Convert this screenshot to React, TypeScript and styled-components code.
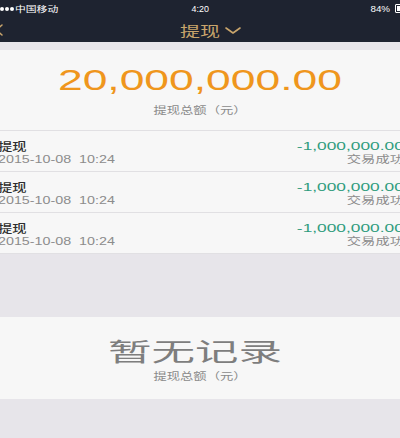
import React from "react";
import styled, { createGlobalStyle } from "styled-components";

const CJK = `"Noto Sans CJK SC", "Liberation Sans", sans-serif`;
const LATIN = `"Liberation Sans", "Noto Sans CJK SC", sans-serif`;

const GOLD = "#c9a56c";
const BAR = "#1e2330";

const Global = createGlobalStyle`
  html, body {
    margin: 0;
    padding: 0;
    background: #e7e5ea;
    overflow: hidden;
  }
  body {
    width: 400px;
    height: 438px;
  }
`;

/* the screen is a touch wider than the window, centred on it */
const Page = styled.div`
  width: 420px;
  margin-left: -10px;
  height: 438px;
  display: flex;
  flex-direction: column;
`;

/* text drawn with horizontally stretched glyphs */
const Wide = styled.span<{ $sx: number; $origin?: string }>`
  display: inline-block;
  white-space: pre;
  transform: scaleX(${(p) => p.$sx});
  transform-origin: ${(p) => p.$origin ?? "center"};
`;

/* ---------- status bar ---------- */
const StatusBar = styled.div`
  height: 17px;
  background: ${BAR};
  color: #ffffff;
  display: grid;
  grid-template-columns: 1fr auto 1fr;
  align-items: center;
`;

const Carrier = styled.div`
  display: flex;
  align-items: center;
  gap: 1px;
  font-family: ${CJK};
  font-size: 8px;
  line-height: 10px;
`;

const Signal = styled.div`
  display: flex;
  gap: 1px;
`;

const Dot = styled.span`
  width: 4px;
  height: 4px;
  border-radius: 50%;
  background: #ffffff;
`;

const Clock = styled.div`
  font-family: ${LATIN};
  font-size: 8.5px;
  line-height: 10px;
`;

const Battery = styled.div`
  display: flex;
  justify-content: flex-end;
  align-items: center;
  gap: 5px;
  font-family: ${LATIN};
  font-size: 8.5px;
  line-height: 10px;
`;

const Cell = styled.span`
  width: 11px;
  height: 5px;
  border: 1px solid #ffffff;
  border-radius: 1px;
  display: flex;
  padding: 1px;
  &::before {
    content: "";
    flex: 0 0 84%;
    background: #ffffff;
  }
`;

/* ---------- navigation bar ---------- */
const NavBar = styled.div`
  height: 25px;
  background: ${BAR};
  display: grid;
  grid-template-columns: 1fr auto 1fr;
  align-items: center;
`;

const Back = styled.svg`
  margin-left: 5px;
  display: block;
`;

const TitleWrap = styled.div`
  position: relative;
  color: ${GOLD};
  font-family: ${CJK};
  font-size: 14px;
  line-height: 18px;
`;

const Caret = styled.svg`
  position: absolute;
  left: calc(100% + 11px);
  top: 6px;
`;

/* ---------- totals ---------- */
const Summary = styled.section`
  margin-top: 8px;
  height: 80px;
  background: #f7f7f7;
  display: flex;
  flex-direction: column;
  align-items: center;
  padding-top: 15px;
  box-sizing: border-box;
`;

const BigAmount = styled.div`
  font-family: ${LATIN};
  font-size: 30px;
  line-height: 30px;
  color: #ef961d;
`;

const Caption = styled.div<{ $gap: number }>`
  margin-top: ${(p) => p.$gap}px;
  font-family: ${CJK};
  font-size: 10px;
  line-height: 12px;
  color: #8a8a8a;
`;

/* ---------- records ---------- */
const List = styled.ul`
  list-style: none;
  margin: 0;
  padding: 0;
  background: #f7f7f7;
  border-top: 1px solid #e1e0e3;
`;

const Row = styled.li`
  height: 41px;
  box-sizing: border-box;
  border-bottom: 1px solid #e1e0e3;
  padding: 8px 6px 0 8px;
  display: flex;
  justify-content: space-between;
`;

const Col = styled.div<{ $align: "left" | "right" }>`
  display: flex;
  flex-direction: column;
  align-items: ${(p) => (p.$align === "left" ? "flex-start" : "flex-end")};
`;

const RowTitle = styled.div`
  font-family: ${CJK};
  font-size: 11px;
  line-height: 14px;
  font-weight: 500;
  color: #2e2e2e;
`;

const RowDate = styled.div`
  font-family: ${LATIN};
  font-size: 11px;
  line-height: 12px;
  color: #8c8c8c;
`;

const RowAmount = styled.div`
  font-family: ${LATIN};
  font-size: 10.5px;
  line-height: 14px;
  color: #2f9c7d;
`;

const RowState = styled.div`
  font-family: ${CJK};
  font-size: 10px;
  line-height: 12px;
  color: #8c8c8c;
`;

/* ---------- empty state ---------- */
const Empty = styled.section`
  margin-top: 63px;
  height: 82px;
  background: #f7f7f7;
  display: flex;
  flex-direction: column;
  align-items: center;
  padding-top: 18px;
  box-sizing: border-box;
`;

const EmptyTitle = styled.div`
  font-family: ${CJK};
  font-size: 25px;
  line-height: 30px;
  color: #7e7e7e;
  margin-right: 10px;
`;

type Record = { title: string; date: string; amount: string; state: string };

const records: Record[] = [
  { title: "提现", date: "2015-10-08  10:24", amount: "-1,000,000.00", state: "交易成功" },
  { title: "提现", date: "2015-10-08  10:24", amount: "-1,000,000.00", state: "交易成功" },
  { title: "提现", date: "2015-10-08  10:24", amount: "-1,000,000.00", state: "交易成功" },
];

export default function App() {
  return (
    <>
      <Global />
      <Page>
        <StatusBar>
          <Carrier>
            <Signal>
              <Dot />
              <Dot />
              <Dot />
              <Dot />
              <Dot />
            </Signal>
            <Wide $sx={1.35} $origin="left">中国移动</Wide>
          </Carrier>
          <Clock>
            <Wide $sx={1.05}>4:20</Wide>
          </Clock>
          <Battery>
            <Wide $sx={1.15} $origin="right">84%</Wide>
            <Cell />
          </Battery>
        </StatusBar>

        <NavBar>
          <Back width="8" height="12" viewBox="0 0 8 12">
            <polyline
              points="7,1 1.5,6 7,11"
              fill="none"
              stroke={GOLD}
              strokeWidth="1.5"
              strokeLinecap="round"
              strokeLinejoin="round"
            />
          </Back>
          <TitleWrap>
            <Wide $sx={1.43}>提现</Wide>
            <Caret width="16" height="7" viewBox="0 0 16 7">
              <polyline
                points="1,1 8,6 15,1"
                fill="none"
                stroke={GOLD}
                strokeWidth="1.6"
                strokeLinecap="round"
                strokeLinejoin="round"
              />
            </Caret>
          </TitleWrap>
          <span />
        </NavBar>

        <Summary>
          <BigAmount>
            <Wide $sx={1.48}>20,000,000.00</Wide>
          </BigAmount>
          <Caption $gap={9}>
            <Wide $sx={1.33}>提现总额（元）</Wide>
          </Caption>
        </Summary>

        <List>
          {records.map((r, i) => (
            <Row key={i}>
              <Col $align="left">
                <RowTitle>
                  <Wide $sx={1.3} $origin="left">{r.title}</Wide>
                </RowTitle>
                <RowDate>
                  <Wide $sx={1.3} $origin="left">{r.date}</Wide>
                </RowDate>
              </Col>
              <Col $align="right">
                <RowAmount>
                  <Wide $sx={1.65} $origin="right">{r.amount}</Wide>
                </RowAmount>
                <RowState>
                  <Wide $sx={1.43} $origin="right">{r.state}</Wide>
                </RowState>
              </Col>
            </Row>
          ))}
        </List>

        <Empty>
          <EmptyTitle>
            <Wide $sx={1.74}>暂无记录</Wide>
          </EmptyTitle>
          <Caption $gap={5}>
            <Wide $sx={1.33}>提现总额（元）</Wide>
          </Caption>
        </Empty>
      </Page>
    </>
  );
}
